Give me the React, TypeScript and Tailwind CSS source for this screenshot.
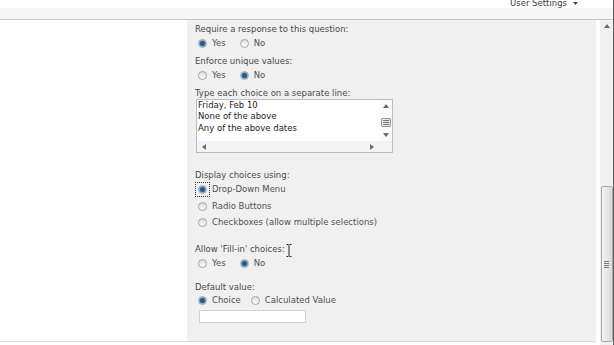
import React from 'react'

function Radio({ checked }: { checked?: boolean }) {
  return (
    <span className="flex h-[9px] w-[9px] shrink-0 items-center justify-center rounded-full border border-[#a6a6a6] bg-gradient-to-b from-[#dedede] to-[#fbfbfb]">
      {checked && (
        <span className="h-[5px] w-[5px] rounded-full bg-[#245a8c] shadow-[0_0_0_1px_#7aa6d0]" />
      )}
    </span>
  )
}

function Option({ checked, label, gap = 'ml-[3px]' }: { checked?: boolean; label: string; gap?: string }) {
  return (
    <span className={`flex items-center ${gap}`}>
      <Radio checked={checked} />
      <span className="ml-[5px] text-[#505050]">{label}</span>
    </span>
  )
}

function Arrow({ dir }: { dir: 'up' | 'down' | 'left' | 'right' }) {
  const pts = {
    up: '0,4 3,0 6,4',
    down: '0,0 6,0 3,4',
    left: '4,0 4,6 0,3',
    right: '0,0 0,6 4,3',
  }[dir]
  const vert = dir === 'up' || dir === 'down'
  return (
    <svg width={vert ? 6 : 4} height={vert ? 4 : 6} viewBox={vert ? '0 0 6 4' : '0 0 4 6'}>
      <polygon points={pts} fill="#6a6a6a" />
    </svg>
  )
}

function Label({ children }: { children: React.ReactNode }) {
  return <div className="h-[11px] leading-[11px] text-[#4a4a4a] whitespace-nowrap">{children}</div>
}

export default function App() {
  return (
    <div className="flex h-[345px] w-[614px] flex-col overflow-hidden border-r border-[#5f5f5f] bg-white font-['DejaVu_Sans',sans-serif] text-[8.5px]">
      {/* top bar */}
      <div className="flex h-[8px] shrink-0 justify-end overflow-hidden pr-[35px]">
        <span className="-mt-[2px] flex h-[10px] items-center leading-[10px] text-[#3a3a3a]">
          User Settings
          <span className="ml-[6px] mt-[1px]">
            <svg width="5" height="3" viewBox="0 0 5 3">
              <polygon points="0,0 5,0 2.5,3" fill="#444" />
            </svg>
          </span>
        </span>
      </div>
      <div className="h-[12px] shrink-0 border-b border-[#c4c4c4] bg-[#f6f6f6]" />

      <div className="flex min-h-0 flex-1">
        <div className="flex flex-1 flex-col">
          <div className="flex h-[322px] shrink-0 border-b border-[#dadada]">
            <div className="w-[187px] shrink-0" />
            <div className="flex flex-1 flex-col bg-[#f0f0f0] pl-[8px] pt-[4px]">
              <Label>Require a response to this question:</Label>
              <div className="mt-[2px] flex h-[12px] items-center">
                <Option checked label="Yes" />
                <Option label="No" gap="ml-[14px]" />
              </div>

              <div className="mt-[7px]">
                <Label>Enforce unique values:</Label>
              </div>
              <div className="mt-[2px] flex h-[12px] items-center">
                <Option label="Yes" />
                <Option checked label="No" gap="ml-[14px]" />
              </div>

              <div className="mt-[7px]">
                <Label>Type each choice on a separate line:</Label>
              </div>
              {/* choices box */}
              <div className="ml-[1px] flex h-[54px] w-[197px] flex-col border border-[#bdbdbd] bg-white">
                <div className="flex h-[41px]">
                  <div className="flex-1 pl-[1px] leading-[11.3px] text-[#1e1e1e]">
                    <div>Friday, Feb 10</div>
                    <div>None of the above</div>
                    <div>Any of the above dates</div>
                  </div>
                  <div className="flex w-[12px] flex-col items-center bg-[#fafafa]">
                    <div className="mt-[4px]">
                      <Arrow dir="up" />
                    </div>
                    <div className="mt-[10px] flex h-[9px] w-[10px] flex-col items-center justify-center gap-[1px] rounded-[1px] border border-[#9a9a9a] bg-gradient-to-r from-[#f2f2f2] to-[#dcdcdc]">
                      <span className="h-px w-[6px] bg-[#777]" />
                      <span className="h-px w-[6px] bg-[#777]" />
                      <span className="h-px w-[6px] bg-[#777]" />
                    </div>
                    <div className="mt-[6px]">
                      <Arrow dir="down" />
                    </div>
                  </div>
                </div>
                <div className="flex flex-1">
                  <div className="flex flex-1 items-center justify-between bg-[#f3f3f3] pl-[5px] pr-[6px]">
                    <Arrow dir="left" />
                    <Arrow dir="right" />
                  </div>
                  <div className="w-[12px] bg-[#f3f3f3]" />
                </div>
              </div>

              <div className="mt-[17px]">
                <Label>Display choices using:</Label>
              </div>
              <div className="mt-[2px] flex h-[12px] items-center">
                <span className="flex items-center border border-dotted border-[#333] px-[2px] py-[2px]">
                  <Radio checked />
                </span>
                <span className="ml-[2px] text-[#505050]">Drop-Down Menu</span>
              </div>
              <div className="mt-[5px] flex h-[12px] items-center">
                <Option label="Radio Buttons" />
              </div>
              <div className="mt-[4px] flex h-[12px] items-center">
                <Option label="Checkboxes (allow multiple selections)" />
              </div>

              <div className="relative mt-[16px]">
                <Label>Allow 'Fill-in' choices:</Label>
                {/* text cursor */}
                <svg className="absolute left-[91px] top-0" width="6" height="13" viewBox="0 0 6 13">
                  <path d="M0.5 0.5H2.5M3.5 0.5H5.5M3 1V12M0.5 12.5H2.5M3.5 12.5H5.5" stroke="#222" strokeWidth="1" fill="none" />
                </svg>
              </div>
              <div className="mt-[2px] flex h-[12px] items-center">
                <Option label="Yes" />
                <Option checked label="No" gap="ml-[14px]" />
              </div>

              <div className="mt-[13px]">
                <Label>Default value:</Label>
              </div>
              <div className="mt-[1px] flex h-[12px] items-center">
                <Option checked label="Choice" />
                <Option label="Calculated Value" gap="ml-[10px]" />
              </div>
              <div className="ml-[4px] mt-[4px] h-[13px] w-[107px] border border-[#d2d2d2] bg-white" />
            </div>
          </div>
        </div>

        <div className="w-[4px] shrink-0" />

        {/* page scrollbar */}
        <div className="flex w-[13px] shrink-0 flex-col items-center bg-[#f0f0f0]">
          <div className="mt-[4px]">
            <Arrow dir="up" />
          </div>
          <div className="mt-[158px] flex h-[156px] w-[12px] items-center justify-center rounded-[2px] border border-[#a9a9a9] bg-gradient-to-r from-[#f4f4f4] to-[#d9d9d9]">
            <div className="flex flex-col gap-[1px]">
              <span className="h-px w-[5px] bg-[#7a7a7a]" />
              <span className="h-px w-[5px] bg-[#7a7a7a]" />
              <span className="h-px w-[5px] bg-[#7a7a7a]" />
              <span className="h-px w-[5px] bg-[#7a7a7a]" />
            </div>
          </div>
        </div>
      </div>
    </div>
  )
}
